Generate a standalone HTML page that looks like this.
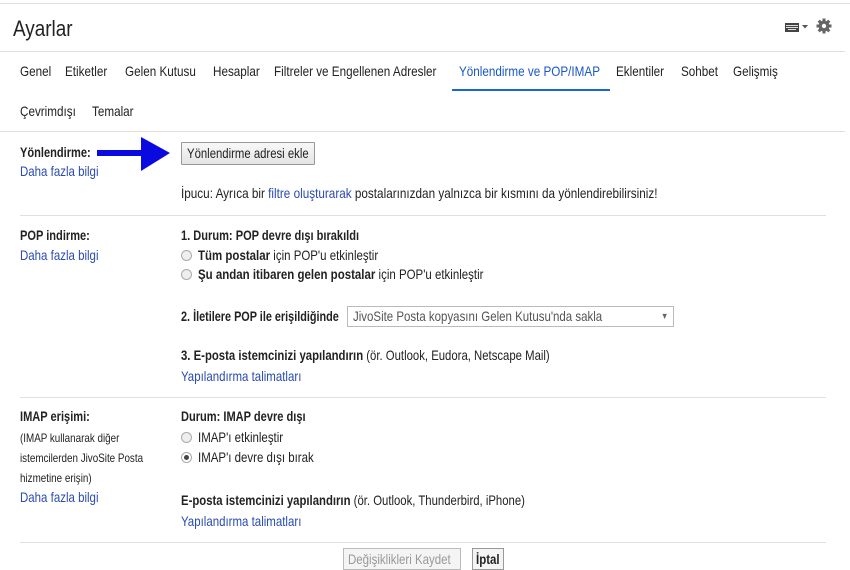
<!DOCTYPE html>
<html><head><meta charset="utf-8"><style>
body{margin:0;width:850px;height:563px;overflow:hidden;background:#fff;position:relative;font-family:"Liberation Sans",Arial,sans-serif;color:#222;font-size:14px}
.t{position:absolute;white-space:nowrap;transform:scaleX(.82);transform-origin:0 0;line-height:16px}
.tab{transform:scaleX(.835)}
.b{font-weight:bold}
.l{color:#2a4bb0}
.hr{position:absolute;height:1px;background:#e0e0e0}
.r{position:absolute;width:9px;height:9px;border:1px solid #aaa;border-radius:50%;background:#eee}
</style></head><body>
<div class="hr" style="left:0;top:3px;width:850px"></div>
<div class="t" style="left:13px;top:16px;font-size:22px;line-height:26px;transform:scaleX(.86)">Ayarlar</div>
<svg style="position:absolute;left:784px;top:17px" width="50" height="20"><rect x="1" y="6" width="14" height="9" fill="#444"/><g stroke="#ddd" stroke-width="1"><line x1="2" y1="8.5" x2="14" y2="8.5"/><line x1="2" y1="10.5" x2="14" y2="10.5"/><line x1="4" y1="12.5" x2="12" y2="12.5"/></g><path d="M18 8h6l-3 3.5z" fill="#555"/><g transform="translate(40,9)"><circle r="5.5" fill="#666"/><g stroke="#666" stroke-width="3"><line x1="0" y1="-7.5" x2="0" y2="7.5"/><line x1="-7.5" y1="0" x2="7.5" y2="0"/><line x1="-5.3" y1="-5.3" x2="5.3" y2="5.3"/><line x1="-5.3" y1="5.3" x2="5.3" y2="-5.3"/></g><circle r="2.2" fill="#fff"/></g></svg>
<div class="hr" style="left:0;top:51px;width:845px"></div>
<div class="t tab" style="left:20px;top:63px">Genel</div>
<div class="t tab" style="left:65px;top:63px">Etiketler</div>
<div class="t tab" style="left:125px;top:63px">Gelen Kutusu</div>
<div class="t tab" style="left:213px;top:63px">Hesaplar</div>
<div class="t tab" style="left:274px;top:63px">Filtreler ve Engellenen Adresler</div>
<div class="t tab" style="left:459px;top:63px;color:#1a56c9">Yönlendirme ve POP/IMAP</div>
<div class="t tab" style="left:616px;top:63px">Eklentiler</div>
<div class="t tab" style="left:681px;top:63px">Sohbet</div>
<div class="t tab" style="left:733px;top:63px">Gelişmiş</div>
<div style="position:absolute;left:452px;top:89px;width:158px;height:2px;background:#1a64d6"></div>
<div class="t tab" style="left:20px;top:103px">Çevrimdışı</div>
<div class="t tab" style="left:92px;top:103px">Temalar</div>
<div class="hr" style="left:0;top:131px;width:845px"></div>

<div class="t b" style="left:20px;top:144px;transform:scaleX(.79)">Yönlendirme:</div>
<div class="t l" style="left:20px;top:163px">Daha fazla bilgi</div>
<svg style="position:absolute;left:96px;top:136px" width="76" height="36"><rect x="1" y="14" width="48" height="6" fill="#0a0ae0"/><path d="M45 1L74 17L45 35z" fill="#0a0ae0"/></svg>
<div style="position:absolute;left:181px;top:142px;width:132px;height:21px;border:1px solid #999;background:linear-gradient(#f8f8f8,#e4e4e4);border-radius:1px"></div>
<div class="t" style="left:187px;top:145px;transform:scaleX(.81)">Yönlendirme adresi ekle</div>
<div class="t" style="left:181px;top:185px;transform:scaleX(.838)">İpucu: Ayrıca bir <span class="l">filtre oluşturarak</span> postalarınızdan yalnızca bir kısmını da yönlendirebilirsiniz!</div>
<div class="hr" style="left:20px;top:215px;width:806px"></div>

<div class="t b" style="left:20px;top:227px;transform:scaleX(.79)">POP indirme:</div>
<div class="t l" style="left:20px;top:247px">Daha fazla bilgi</div>
<div class="t b" style="left:181px;top:227px;transform:scaleX(.79)">1. Durum: POP devre dışı bırakıldı</div>
<div class="r" style="left:181px;top:250px"></div>
<div class="t" style="left:198px;top:247px"><b>Tüm postalar</b> için POP'u etkinleştir</div>
<div class="r" style="left:181px;top:269px"></div>
<div class="t" style="left:198px;top:266px"><b>Şu andan itibaren gelen postalar</b> için POP'u etkinleştir</div>
<div class="t b" style="left:181px;top:308px;transform:scaleX(.775)">2. İletilere POP ile erişildiğinde</div>
<div style="position:absolute;left:347px;top:306px;width:325px;height:19px;border:1px solid #bbb;background:#fff"></div>
<div class="t" style="left:353px;top:308px;color:#555">JivoSite Posta kopyasını Gelen Kutusu'nda sakla</div>
<div class="t" style="left:661px;top:308px;font-size:9px;color:#666">▼</div>
<div class="t" style="left:181px;top:347px;transform:scaleX(.81)"><b>3. E-posta istemcinizi yapılandırın</b> (ör. Outlook, Eudora, Netscape Mail)</div>
<div class="t l" style="left:181px;top:368px">Yapılandırma talimatları</div>
<div class="hr" style="left:20px;top:397px;width:806px"></div>

<div class="t b" style="left:20px;top:408px;transform:scaleX(.79)">IMAP erişimi:</div>
<div class="t" style="left:20px;top:430px;font-size:12px">(IMAP kullanarak diğer</div>
<div class="t" style="left:20px;top:450px;font-size:12px">istemcilerden JivoSite Posta</div>
<div class="t" style="left:20px;top:470px;font-size:12px">hizmetine erişin)</div>
<div class="t l" style="left:20px;top:489px">Daha fazla bilgi</div>
<div class="t b" style="left:181px;top:408px;transform:scaleX(.79)">Durum: IMAP devre dışı</div>
<div class="r" style="left:181px;top:432px"></div>
<div class="t" style="left:198px;top:429px">IMAP'ı etkinleştir</div>
<div class="r" style="left:181px;top:452px;background:#fff"></div>
<div style="position:absolute;left:184px;top:455px;width:5px;height:5px;border-radius:50%;background:#444"></div>
<div class="t" style="left:198px;top:449px">IMAP'ı devre dışı bırak</div>
<div class="t" style="left:181px;top:492px;transform:scaleX(.81)"><b>E-posta istemcinizi yapılandırın</b> (ör. Outlook, Thunderbird, iPhone)</div>
<div class="t l" style="left:181px;top:513px">Yapılandırma talimatları</div>
<div class="hr" style="left:20px;top:542px;width:806px"></div>
<div style="position:absolute;left:343px;top:548px;width:116px;height:20px;border:1px solid #bbb;background:#f4f4f4"></div>
<div class="t" style="left:348px;top:551px;color:#999">Değişiklikleri Kaydet</div>
<div style="position:absolute;left:472px;top:548px;width:30px;height:20px;border:1px solid #999;background:#f4f4f4"></div>
<div class="t b" style="left:476px;top:551px">İptal</div>
</body></html>
